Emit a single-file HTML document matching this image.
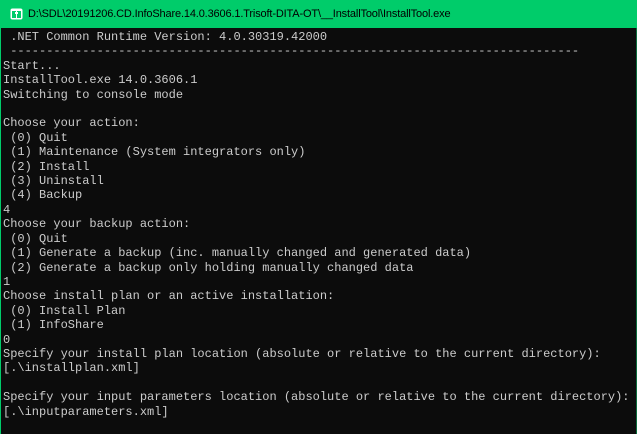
<!DOCTYPE html>
<html><head><meta charset="utf-8"><style>
html,body{margin:0;padding:0;width:637px;height:434px;overflow:hidden;background:#0c0c0c}
.tb{position:absolute;left:0;top:0;width:637px;height:28px;background:#00cc6a}
.tb .t{position:absolute;left:28px;top:8px;font:11px "Liberation Sans",sans-serif;color:#000;white-space:nowrap;letter-spacing:-0.15px}
.lb{position:absolute;left:0;top:28px;width:1px;height:406px;background:#00cc6a}
.rb{position:absolute;right:0;top:28px;width:1px;height:406px;background:#0a6b3c}
pre{position:absolute;left:3px;top:30px;margin:0;font:12px/14.4px "Liberation Mono",monospace;color:#cccccc}
</style></head><body>
<div class="tb">
<svg style="position:absolute;left:10px;top:8px" width="13" height="12" viewBox="0 0 13 12"><rect x="0.5" y="0.5" width="12" height="11" rx="2" fill="#fff"/><rect x="2" y="3" width="4" height="7" fill="#00cc6a"/><rect x="7" y="3" width="4" height="7" fill="#00cc6a"/><rect x="5" y="4" width="3" height="2" fill="#fff"/></svg>
<div class="t">D:\SDL\20191206.CD.InfoShare.14.0.3606.1.Trisoft-DITA-OT\__InstallTool\InstallTool.exe</div>
</div>
<div class="lb"></div><div class="rb"></div>
<pre> .NET Common Runtime Version: 4.0.30319.42000
 -------------------------------------------------------------------------------
Start...
InstallTool.exe 14.0.3606.1
Switching to console mode

Choose your action:
 (0) Quit
 (1) Maintenance (System integrators only)
 (2) Install
 (3) Uninstall
 (4) Backup
4
Choose your backup action:
 (0) Quit
 (1) Generate a backup (inc. manually changed and generated data)
 (2) Generate a backup only holding manually changed data
1
Choose install plan or an active installation:
 (0) Install Plan
 (1) InfoShare
0
Specify your install plan location (absolute or relative to the current directory):
[.\installplan.xml]

Specify your input parameters location (absolute or relative to the current directory):
[.\inputparameters.xml]</pre>
</body></html>
